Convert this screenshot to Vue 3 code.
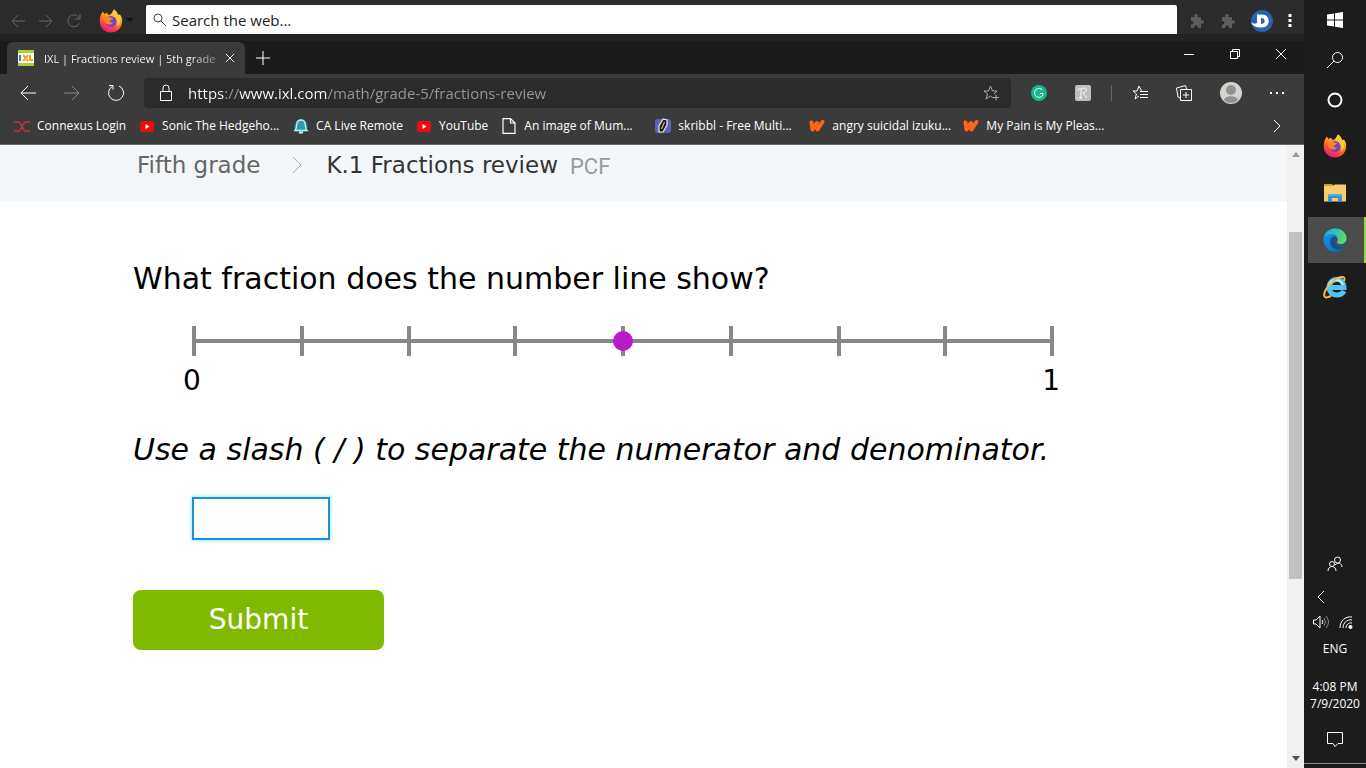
<script setup>
import { ref } from "vue";

const search = ref("");
const address = ref("https://www.ixl.com/math/grade-5/fractions-review");
const answer = ref("");

/* Bookmarks bar; clipped entries all take the maximum width */
const bookmarks = [
  { label: "Connexus Login", icon: "connexus" },
  { label: "Sonic The Hedgeho...", icon: "youtube", clipped: true },
  { label: "CA Live Remote", icon: "bell" },
  { label: "YouTube", icon: "youtube" },
  { label: "An image of Mum...", icon: "page", clipped: true },
  { label: "skribbl - Free Multi...", icon: "skribbl", clipped: true },
  { label: "angry suicidal izuku...", icon: "wattpad", clipped: true },
  { label: "My Pain is My Pleas...", icon: "wattpad", clipped: true },
];

const apps = [
  { name: "Firefox", icon: "firefox" },
  { name: "File Explorer", icon: "folder" },
  { name: "Microsoft Edge", icon: "edge", active: true },
  { name: "Internet Explorer", icon: "ie" },
];

/* Number line, split in eighths with the point on the fourth tick */
const ticks = [2, 110, 217, 323, 431, 539, 647, 753, 860];
const point = ticks[4];
</script>

<template>
  <svg class="sprite" aria-hidden="true">
    <defs>
      <linearGradient id="ff-body" x1="0.8" y1="0" x2="0.3" y2="1">
        <stop offset="0" stop-color="#fff04a" />
        <stop offset="0.4" stop-color="#ff9a25" />
        <stop offset="0.7" stop-color="#ff4a3c" />
        <stop offset="1" stop-color="#e8127e" />
      </linearGradient>
      <linearGradient id="edge-top" x1="0" y1="0.4" x2="1" y2="0.6">
        <stop offset="0" stop-color="#2aa5dc" />
        <stop offset="0.5" stop-color="#35c6b0" />
        <stop offset="1" stop-color="#66db55" />
      </linearGradient>
      <linearGradient id="edge-low" x1="0" y1="0" x2="1" y2="1">
        <stop offset="0" stop-color="#1b9de2" />
        <stop offset="1" stop-color="#0c5fb4" />
      </linearGradient>
    </defs>
    <symbol id="firefox" viewBox="0 0 24 24">
      <path fill="url(#ff-body)" d="M2 5.500 3.800 2.500 5.500 5 8 3.800 9.500 6C12 5.500 13 4 15 .500C17.500 2 18.500 4 19 6L21 5.500C23 8 23.500 11 23 14C22 20 17.500 23.500 12 23.500C6 23.500 1 19 .800 13C.700 10 1 8 2 5.500z" />
      <path fill="#ffc832" d="M15 .500c3.500 2.500 3.500 5 5.500 8 1.500 3 .500 7-2.500 9 1-4 0-8-4-10-1.500-2-1-4 1-7z" />
      <circle cx="12" cy="12.500" r="5.500" fill="#7542c5" />
      <path fill="#ff8424" d="M4.500 7.500c2.500-1.500 5-1 6.500 1l3 .500c0 1.500-3 2-3.500 3.500 1 1 2.500 1.500 4 .500-1 2.500-4.500 3.500-7.500 1.500-2-1.500-3-4-2.500-7z" />
    </symbol>
    <symbol id="folder" viewBox="0 0 24 24">
      <path fill="#d99b18" d="M1 3h8l2 2h-10z" />
      <path fill="#f3cf70" d="M1 5h9l1.500-1.500H23V20.500H1z" />
      <path fill="#3d8fd0" d="M5 13h14v8h-4v-4H9v4H5z" />
      <path fill="#5aa9e0" d="M5 13h14v2H5z" />
    </symbol>
    <symbol id="edge" viewBox="0 0 24 24">
      <circle cx="12" cy="12" r="11.500" fill="url(#edge-low)" />
      <path fill="#12508f" d="M8 11c-2 5 1 10 7 10.500 3 0 5-1 7-3-4 1.500-9-.500-10-5-.500-2 .500-4 2-5-3-.500-5 .500-6 2.500z" />
      <path fill="url(#edge-top)" d="M.800 9.500C2 4 6.500.500 12 .500c7 0 11.500 5 11.500 9.500 0 4-3 6-6 6-2.500 0-4-1-3.500-2 1-1 1.200-2 .800-3.500C14 7.500 11.500 6 8.500 6 5 6 2.200 7.500.800 9.500z" />
      <path fill="#4b4b4b" d="M12.200 9.500c2 0 3 2 2 4-.800 1-.300 2 1.500 2.500 2.500.700 5 .500 7.500-1 0 2-1.500 3.500-4.500 3.500-4 0-7.500-2-7.700-5.500 0-1.500.400-2.700 1.200-3.500z" />
    </symbol>
    <symbol id="ie" viewBox="0 0 24 24">
      <path fill="none" stroke="#54c2f3" stroke-width="5" d="M21 16c-1.300 3-4 4-7.500 4-4.500 0-7.500-3.500-7.500-7.500s3-8 7.500-8 7.500 3.500 7.500 8H7" />
      <path fill="none" stroke="#c5edff" stroke-width="2" d="M6 10c1-3.500 4-5 7-5s6 2 7 5" />
      <path fill="none" stroke="#f0bf32" stroke-width="2" d="M21 6c2.500-6-5-4.500-9.500-1C5 9.500-1 19 2 22c1.500 1 4 0 6-1" />
    </symbol>
    <symbol id="connexus" viewBox="0 0 16 16">
      <path fill="none" stroke="#c33539" stroke-width="1.500" d="M0 4h4q2 0 4 4.500t4 4.500h4M0 13h4q2 0 4-4.500t4-4.500h4" />
    </symbol>
    <symbol id="youtube" viewBox="0 0 16 16">
      <rect x="1" y="3" width="14" height="11" rx="3" fill="#f00b0b" />
      <path fill="#fff" d="m6.500 6 4 2.500-4 2.500z" />
    </symbol>
    <symbol id="bell" viewBox="0 0 16 16">
      <circle cx="8" cy="8" r="7" fill="#176e7c" />
      <path fill="#2b9caa" stroke="#bcecf0" stroke-width="1.500" d="M2 12.500c2-2 1-5 2-7.500 1-4 7-4 8 0s0 5.500 2 7.500z" />
      <path stroke="#d6f7f9" stroke-width="2" d="M6 14.500h4" />
    </symbol>
    <symbol id="page" viewBox="0 0 16 16">
      <path fill="none" stroke="#fff" stroke-width="1.200" d="M2 .600h7.500L14 5v10.400H2zM9.500.600V5H14" />
    </symbol>
    <symbol id="skribbl" viewBox="0 0 16 16">
      <rect x="0" y="1" width="16" height="14" rx="3" fill="#5965bd" />
      <path fill="#15151d" stroke="#eee" stroke-width="1.200" d="m4 14 0-6 4-7 4 1v5l-4 7z" />
      <path stroke="#e09b4b" stroke-width="1.500" d="m9.500 4-3 7" />
    </symbol>
    <symbol id="wattpad" viewBox="0 0 16 16">
      <path fill="none" stroke="#ff6519" stroke-width="4" stroke-linecap="round" stroke-linejoin="round" d="m2.500 4.500 1 7L8 5l.500 6.500L13.500 4" />
    </symbol>
    <symbol id="puzzle" viewBox="0 0 16 16">
      <path fill="#5c5c5c" d="M2 4h3.500C4 0 10 0 8.500 4H12v3.500c4-1.500 4 4.500 0 3V15H8.800c1-3.500-4.600-3.500-3.600 0H2v-3.500c3 1 3-4.500 0-3.500z" />
    </symbol>
  </svg>

  <div class="screen">
    <div class="window">
      <header class="search-bar">
        <button class="icon-btn dim" aria-label="Back">
          <svg width="16" height="16" viewBox="0 0 16 16"><path d="M15 8H2M8 2 2 8l6 6" /></svg>
        </button>
        <button class="icon-btn dim" aria-label="Forward">
          <svg width="16" height="16" viewBox="0 0 16 16"><path d="M1 8h13M8 2l6 6-6 6" /></svg>
        </button>
        <button class="icon-btn dim" aria-label="Reload">
          <svg width="16" height="16" viewBox="0 0 16 16"><path d="M13.500 10A6 6 0 1 1 12.500 4L14 6M14 1v5H9" /></svg>
        </button>
        <button class="icon-btn launcher" aria-label="Open Firefox">
          <svg width="24" height="24"><use href="#firefox" /></svg>
          <svg width="8" height="5" viewBox="0 0 8 5"><path class="caret" d="M0 0h8L4 4z" /></svg>
        </button>
        <label class="search">
          <svg width="14" height="14" viewBox="0 0 14 14"><circle cx="5" cy="5" r="4" /><path d="m8 8 5 5" /></svg>
          <input v-model="search" type="text" placeholder="Search the web..." aria-label="Search the web" />
        </label>
        <div class="extensions">
          <button class="icon-btn" aria-label="Extension"><svg width="16" height="16"><use href="#puzzle" /></svg></button>
          <button class="icon-btn" aria-label="Extension"><svg width="16" height="16"><use href="#puzzle" /></svg></button>
          <button class="icon-btn" aria-label="Profile">
            <svg width="22" height="22" viewBox="0 0 22 22">
              <circle class="profile-disc" cx="11" cy="11" r="11" />
              <path class="profile-mark" d="M6 4.500h5c9 0 9 13 0 13-5 0-9.500-1-11-5.500 2 2 4 2 6 1zM10 8v6c5 0 5-6 0-6z" />
            </svg>
          </button>
          <button class="icon-btn" aria-label="Menu">
            <svg width="4" height="16" viewBox="0 0 4 16"><path class="dots" d="M.500 1h3v3h-3zM.500 6h3v3h-3zM.500 11h3v3h-3z" /></svg>
          </button>
        </div>
      </header>

      <div class="tab-strip">
        <div class="tab">
          <svg width="16" height="16" viewBox="0 0 16 16">
            <path fill="#fff" stroke="none" d="M0 0h16v16H0z" />
            <path fill="#a9d136" stroke="none" d="M0 0h16v3H0zM0 13h16v3H0z" />
            <path stroke="#1d8ac4" stroke-width="2" d="M2 5v6" />
            <path stroke="#f7a11b" stroke-width="2" d="m5 5 5 6m0-6-5 6m7-6v5h3" />
          </svg>
          <span class="tab-title">IXL | Fractions review | 5th grade</span>
          <button class="icon-btn" aria-label="Close tab">
            <svg width="10" height="10" viewBox="0 0 10 10"><path d="m1 1 8 8m0-8-8 8" /></svg>
          </button>
        </div>
        <button class="icon-btn new-tab" aria-label="New tab">
          <svg width="14" height="14" viewBox="0 0 14 14"><path d="M7 0v14M0 7h14" /></svg>
        </button>
        <div class="window-buttons">
          <button class="icon-btn" aria-label="Minimize"><svg width="12" height="12" viewBox="0 0 12 12"><path d="M1 6.500h10" /></svg></button>
          <button class="icon-btn" aria-label="Restore"><svg width="12" height="12" viewBox="0 0 12 12"><path d="M1.500 3.500h7v7h-7zM3.500 3.500v-2h7v7h-2" /></svg></button>
          <button class="icon-btn" aria-label="Close"><svg width="12" height="12" viewBox="0 0 12 12"><path d="m1 1 10 10m0-10L1 11" /></svg></button>
        </div>
      </div>

      <div class="nav-bar">
        <button class="icon-btn nav-btn" aria-label="Back">
          <svg width="16" height="16" viewBox="0 0 16 16"><path d="M16 8H1M8 1 1 8l7 7" /></svg>
        </button>
        <button class="icon-btn nav-btn muted" aria-label="Forward">
          <svg width="16" height="16" viewBox="0 0 16 16"><path d="M0 8h15M8 1l7 7-7 7" /></svg>
        </button>
        <button class="icon-btn nav-btn" aria-label="Refresh">
          <svg width="18" height="18" viewBox="0 0 18 18"><path d="M12 2a7.500 7.500 0 1 1-6.500.300M2 1.500h4v4" /></svg>
        </button>
        <div class="address">
          <svg width="14" height="18" viewBox="0 0 14 18"><path d="M1.500 7.500h11v9h-11zM4 7V4a3 3 0 0 1 6 0v3" /></svg>
          <input v-model="address" type="text" aria-label="Address" />
          <button class="icon-btn grey" aria-label="Add to favorites">
            <svg width="16" height="16" viewBox="0 0 16 16"><path d="m10 13-2.500-2L3 14l1.500-5L1 6h4.500L7.500 1l2 5H14l-3 3M13 9.500v6M10 12.500h6" /></svg>
          </button>
        </div>
        <div class="nav-tools">
          <button class="icon-btn" aria-label="Grammarly">
            <svg width="16" height="16" viewBox="0 0 16 16"><circle cx="8" cy="8" r="8" fill="#15b98f" stroke="none" /><path d="M11.500 5A4.500 4.500 0 1 0 12 10V8.500H9" /></svg>
          </button>
          <button class="icon-btn" aria-label="Extension">
            <svg width="16" height="16" viewBox="0 0 16 16"><rect width="16" height="16" rx="2" fill="#bdbdbd" stroke="none" /><path d="M3 6c0-3 3-3 3-1v8M6 4c5-3 8 2 2 4l4 5M4 13h3" /></svg>
          </button>
          <span class="divider"></span>
          <button class="icon-btn" aria-label="Favorites">
            <svg width="16" height="16" viewBox="0 0 16 16"><path d="m9.500 6-2.500-5-2 5H1l3.500 3L3 14l4-3M8 6.500h8M8 9.500h8M8 12.500h8" /></svg>
          </button>
          <button class="icon-btn" aria-label="Collections">
            <svg width="16" height="16" viewBox="0 0 16 16"><path d="M4.500 4.500h11v11h-11zM4 13l-2-1L.500 3l9-2.500 1 3.500M10 7v6M7 10h6" /></svg>
          </button>
          <button class="icon-btn" aria-label="Account">
            <svg width="22" height="22" viewBox="0 0 22 22">
              <circle cx="11" cy="11" r="11" fill="#d6d4d1" stroke="none" />
              <circle cx="11" cy="8" r="5" fill="#94918e" stroke="none" />
              <path fill="#94918e" stroke="none" d="M4 18c1-5 13-5 14 0-3 4-11 4-14 0z" />
            </svg>
          </button>
          <button class="icon-btn" aria-label="Settings and more">
            <svg width="14" height="4" viewBox="0 0 14 4"><path class="dots" d="M0 1h2v2H0zM6 1h2v2H6zM12 1h2v2h-2z" /></svg>
          </button>
        </div>
      </div>

      <nav class="bookmarks">
        <a v-for="(b, i) in bookmarks" :key="i" href="#" :class="{ clipped: b.clipped }">
          <svg width="16" height="16"><use :href="'#' + b.icon" /></svg>
          <span>{{ b.label }}</span>
        </a>
        <button class="icon-btn more" aria-label="More favorites">
          <svg width="8" height="12" viewBox="0 0 8 12"><path d="m1 0 6 6-6 6" /></svg>
        </button>
      </nav>

      <div class="viewport">
        <main>
          <nav class="crumbs">
            <a href="#">Fifth grade</a>
            <svg width="10" height="16" viewBox="0 0 10 16"><path d="m1 0 8 8-8 8" /></svg>
            <span>K.1 Fractions review</span>
            <small>PCF</small>
          </nav>

          <form class="question" @submit.prevent>
            <h1>What fraction does the number line show?</h1>
            <div class="number-line">
              <svg viewBox="0 0 862 30" role="img" aria-label="Number line from 0 to 1">
                <path class="axis" d="M2 15h858" />
                <path v-for="x in ticks" :key="x" class="axis" :d="`M${x} 0v30`" />
                <circle class="point" :cx="point" cy="15" r="10" />
              </svg>
              <div class="ends"><span>0</span><span>1</span></div>
            </div>
            <label for="answer">Use a slash ( / ) to separate the numerator and denominator.</label>
            <input id="answer" v-model="answer" class="answer" type="text" />
            <button class="submit" type="submit">Submit</button>
          </form>
        </main>

        <div class="scrollbar">
          <svg width="8" height="5" viewBox="0 0 8 5"><path fill="#999" d="m4 0 4 5H0z" /></svg>
          <div class="track">
            <span class="before"></span>
            <span class="thumb"></span>
            <span class="after"></span>
          </div>
          <svg width="8" height="5" viewBox="0 0 8 5"><path fill="#505050" d="m4 5 4-5H0z" /></svg>
        </div>
      </div>
    </div>

    <aside class="taskbar">
      <div class="system">
        <button class="icon-btn" aria-label="Start">
          <svg width="16" height="16" viewBox="0 0 16 16"><path class="dots" d="M0 2.500 7 1.500v6H0zM8 1.300 16 0v7.500H8zM0 8.500h7v6l-7-1zM8 8.500h8V16l-8-1.300z" /></svg>
        </button>
        <button class="icon-btn" aria-label="Search">
          <svg width="16" height="16" viewBox="0 0 16 16"><circle cx="10.500" cy="5.500" r="5" /><path d="M7 9 0 16" /></svg>
        </button>
        <button class="icon-btn" aria-label="Cortana">
          <svg width="16" height="16" viewBox="0 0 16 16"><circle cx="8" cy="8" r="6.500" stroke-width="2" /></svg>
        </button>
      </div>
      <div class="apps">
        <button v-for="app in apps" :key="app.name" class="icon-btn" :class="{ active: app.active }" :aria-label="app.name">
          <svg width="24" height="24"><use :href="'#' + app.icon" /></svg>
        </button>
      </div>
      <div class="tray">
        <button class="icon-btn" aria-label="People">
          <svg width="16" height="16" viewBox="0 0 16 16"><circle cx="10.500" cy="4" r="3" /><circle cx="5" cy="8" r="2.500" /><path d="M1 15c0-6 8-6 8 0M8 9c3-3 7-2 7 2" /></svg>
        </button>
        <div class="tray-row">
          <button class="icon-btn" aria-label="Show hidden icons">
            <svg width="16" height="12" viewBox="0 0 16 12"><path d="M11 0 5 6l6 6" /></svg>
          </button>
        </div>
        <div class="tray-row">
          <button class="icon-btn" aria-label="Volume">
            <svg width="16" height="14" viewBox="0 0 16 14"><path d="M.500 5H3l4-4v12L3 9H.500zM9 5q2 2 0 4" /><path stroke="#888" d="M11 3q3 4 0 8M13 1q5 6 0 12" /></svg>
          </button>
          <button class="icon-btn" aria-label="Network">
            <svg width="14" height="14" viewBox="0 0 14 14"><path d="M1 13C1 6 6 1 13 2M4 13c0-5 4-9 9-8M7 13c0-3 3-6 6-5" /><circle class="dots" cx="11.500" cy="12" r="2" /></svg>
          </button>
        </div>
        <span class="lang">ENG</span>
        <time class="clock">4:08 PM<br />7/9/2020</time>
        <button class="icon-btn" aria-label="Notifications">
          <svg width="16" height="16" viewBox="0 0 16 16"><path d="M.500 1.500h15v11H11l-3 3-2-3H.500z" /></svg>
        </button>
      </div>
    </aside>
  </div>
</template>

<style>
body { background: #fff; }
</style>

<style scoped>
* { box-sizing: border-box; }

.sprite { position: absolute; width: 0; height: 0; }

.screen {
  display: flex;
  min-height: 100vh;
  font-family: "Open Sans", "Noto Sans", sans-serif;
  font-size: 12px;
  color: #fff;
}
.window {
  flex: 1;
  min-width: 0;
  display: flex;
  flex-direction: column;
}

svg { flex: none; display: block; fill: none; stroke: currentColor; }
use, symbol { stroke: none; }
.dots { fill: currentColor; stroke: none; }
.icon-btn {
  display: flex;
  align-items: center;
  justify-content: center;
  padding: 0;
  border: 0;
  background: none;
  color: #fff;
}
.icon-btn.dim { color: #666; }
.icon-btn.muted { color: #888; }
.icon-btn.grey { color: #aaa; }

/* Outer search toolbar */
.search-bar {
  display: flex;
  align-items: center;
  gap: 12px;
  height: 41px;
  padding: 0 12px 0 10px;
  background: #2b2b2b;
  border-bottom: 7px solid #222;
}
.search-bar .icon-btn { padding-top: 7px; }
.launcher { gap: 3px; margin-left: 5px; }
.caret { fill: #111; stroke: none; }
.search {
  align-self: flex-end;
  flex: 1;
  display: flex;
  align-items: center;
  gap: 5px;
  height: 29px;
  padding-left: 7px;
  border-radius: 2px 2px 0 0;
  background: #fff;
  color: #444;
}
.search input {
  flex: 1;
  min-width: 0;
  padding: 0;
  border: 0;
  outline: 0;
  background: none;
  font: 15px "Open Sans", "Noto Sans", sans-serif;
  color: #222;
}
.search input::placeholder { color: #222; opacity: 1; }
.extensions { display: flex; align-items: center; gap: 15px; }
.profile-disc { fill: #2a62b3; stroke: none; }
.profile-mark { fill: #fff; fill-rule: evenodd; stroke: none; }

/* Tabs */
.tab-strip {
  display: flex;
  align-items: center;
  height: 33px;
  padding-left: 7px;
  background: #1b1b1b;
}
.tab {
  display: flex;
  align-items: center;
  align-self: flex-end;
  width: 238px;
  height: 32px;
  padding: 0 10px 0 11px;
  border-radius: 6px 6px 0 0;
  background: #3b3b3b;
}
.tab-title {
  margin: 0 auto 0 10px;
  font-size: 11px;
  white-space: nowrap;
  background: linear-gradient(to right, #fff 85%, #888);
  background-clip: text;
  -webkit-text-fill-color: transparent;
}
.new-tab { margin-left: 11px; }
.window-buttons {
  display: flex;
  gap: 34px;
  margin-left: auto;
  padding: 0 17px 8px 0;
}

/* Navigation */
.nav-bar {
  display: flex;
  align-items: center;
  height: 38px;
  padding-left: 6px;
  background: #3b3b3b;
}
.nav-btn { width: 44px; }
.address {
  flex: 1;
  display: flex;
  align-items: center;
  gap: 15px;
  height: 30px;
  margin-left: 6px;
  padding: 0 12px 0 15px;
  border-radius: 4px;
  background: #2b2b2b;
}
.address input {
  flex: 1;
  min-width: 0;
  padding: 0;
  border: 0;
  outline: 0;
  font: 15px "Open Sans", "Noto Sans", sans-serif;
  /* host parts are bright, the rest of the URL is muted */
  background: linear-gradient(to right, #fff 36px, #999 36px 51px, #fff 51px 140px, #999 140px);
  background-clip: text;
  color: #fff;
  -webkit-text-fill-color: transparent;
}
.nav-tools {
  display: flex;
  align-items: center;
  gap: 28px;
  padding: 0 20px;
}
.divider { width: 1px; height: 16px; margin: 0 -8px; background: #666; }

.bookmarks {
  display: flex;
  align-items: center;
  height: 33px;
  padding: 0 23px 5px 14px;
  border-bottom: 1px solid #666;
  background: #3b3b3b;
}
.bookmarks a {
  display: flex;
  align-items: center;
  gap: 7px;
  margin-right: 13px;
  color: #fff;
  text-decoration: none;
  white-space: nowrap;
}
.bookmarks .clipped { width: 141px; }
.more { margin-left: auto; }

/* Page */
.viewport {
  flex: 1;
  display: flex;
  background: #fff;
  color: #000;
  font-family: "DejaVu Sans", Verdana, sans-serif;
}
main { flex: 1; min-width: 0; }
.crumbs {
  display: flex;
  align-items: center;
  height: 57px;
  padding: 0 0 18px 137px;
  background: #f3f7fa;
  color: #333;
  font-size: 23px;
}
.crumbs a { color: #666; text-decoration: none; }
.crumbs svg { margin: 0 24px 0 32px; color: #aaa; }
.crumbs small {
  margin-left: 12px;
  padding-top: 4px;
  font: 22px Roboto, sans-serif;
  color: #999;
}

.question {
  display: flex;
  flex-direction: column;
  align-items: flex-start;
  padding: 59px 133px 0;
}
h1 {
  margin: 0;
  font-size: 30px;
  line-height: 36px;
  font-weight: 400;
}
.number-line {
  width: 100%;
  max-width: 921px;
  margin: 29px 0 33px;
  padding-left: 59px;
}
.number-line svg { width: 100%; }
.axis { stroke: #888; stroke-width: 4; }
.point { fill: #b91bc9; stroke: none; }
.ends {
  display: flex;
  justify-content: space-between;
  margin: 7px -6px 0 -9px;
  font-size: 28px;
  line-height: 36px;
}
.question label {
  font-size: 30px;
  line-height: 36px;
  font-style: italic;
}
.answer {
  width: 138px;
  height: 43px;
  margin: 29px 0 50px 59px;
  padding: 0 8px;
  border: 2px solid #1b91d6;
  outline: 0;
  box-shadow: 0 0 3px 1px #a9eaff;
  font: 28px "DejaVu Sans", Verdana, sans-serif;
}
.submit {
  width: 251px;
  height: 60px;
  padding: 0 6px 2px;
  border: 0;
  border-radius: 8px;
  background: #7fba00;
  color: #fff;
  font: 28px "DejaVu Sans", Verdana, sans-serif;
}

.scrollbar {
  display: flex;
  flex-direction: column;
  align-items: center;
  width: 17px;
  padding: 7px 2px;
  background: #f0f0f0;
}
.scrollbar svg { stroke: none; }
.track {
  flex: 1;
  display: flex;
  flex-direction: column;
  align-self: stretch;
  padding: 5px 0;
}
.before { flex: 70; }
.thumb { flex: 347; background: #c1c1c1; }
.after { flex: 172; }

/* Taskbar */
.taskbar {
  display: flex;
  flex-direction: column;
  width: 62px;
  padding-bottom: 4px;
  background: #1c1c1c;
}
.system .icon-btn { width: 100%; height: 40px; }
.apps {
  display: flex;
  flex-direction: column;
  gap: 1px;
  padding: 3px 0 0 4px;
}
.apps .icon-btn { height: 46px; padding-right: 4px; }
.apps .active {
  padding-right: 2px;
  border-right: 2px solid #91dc47;
  background: #4b4b4b;
}
.tray {
  display: flex;
  flex-direction: column;
  align-items: center;
  margin-top: auto;
  padding-bottom: 16px;
  border-bottom: 1px solid #888;
}
.tray-row {
  display: flex;
  align-items: center;
  gap: 10px;
  align-self: stretch;
  height: 25px;
  padding-left: 9px;
}
.tray > .icon-btn + .tray-row { margin-top: 12px; }
.lang { margin: 6px 0 21px; line-height: 17px; }
.clock {
  margin-bottom: 19px;
  line-height: 17px;
  text-align: center;
}
</style>
